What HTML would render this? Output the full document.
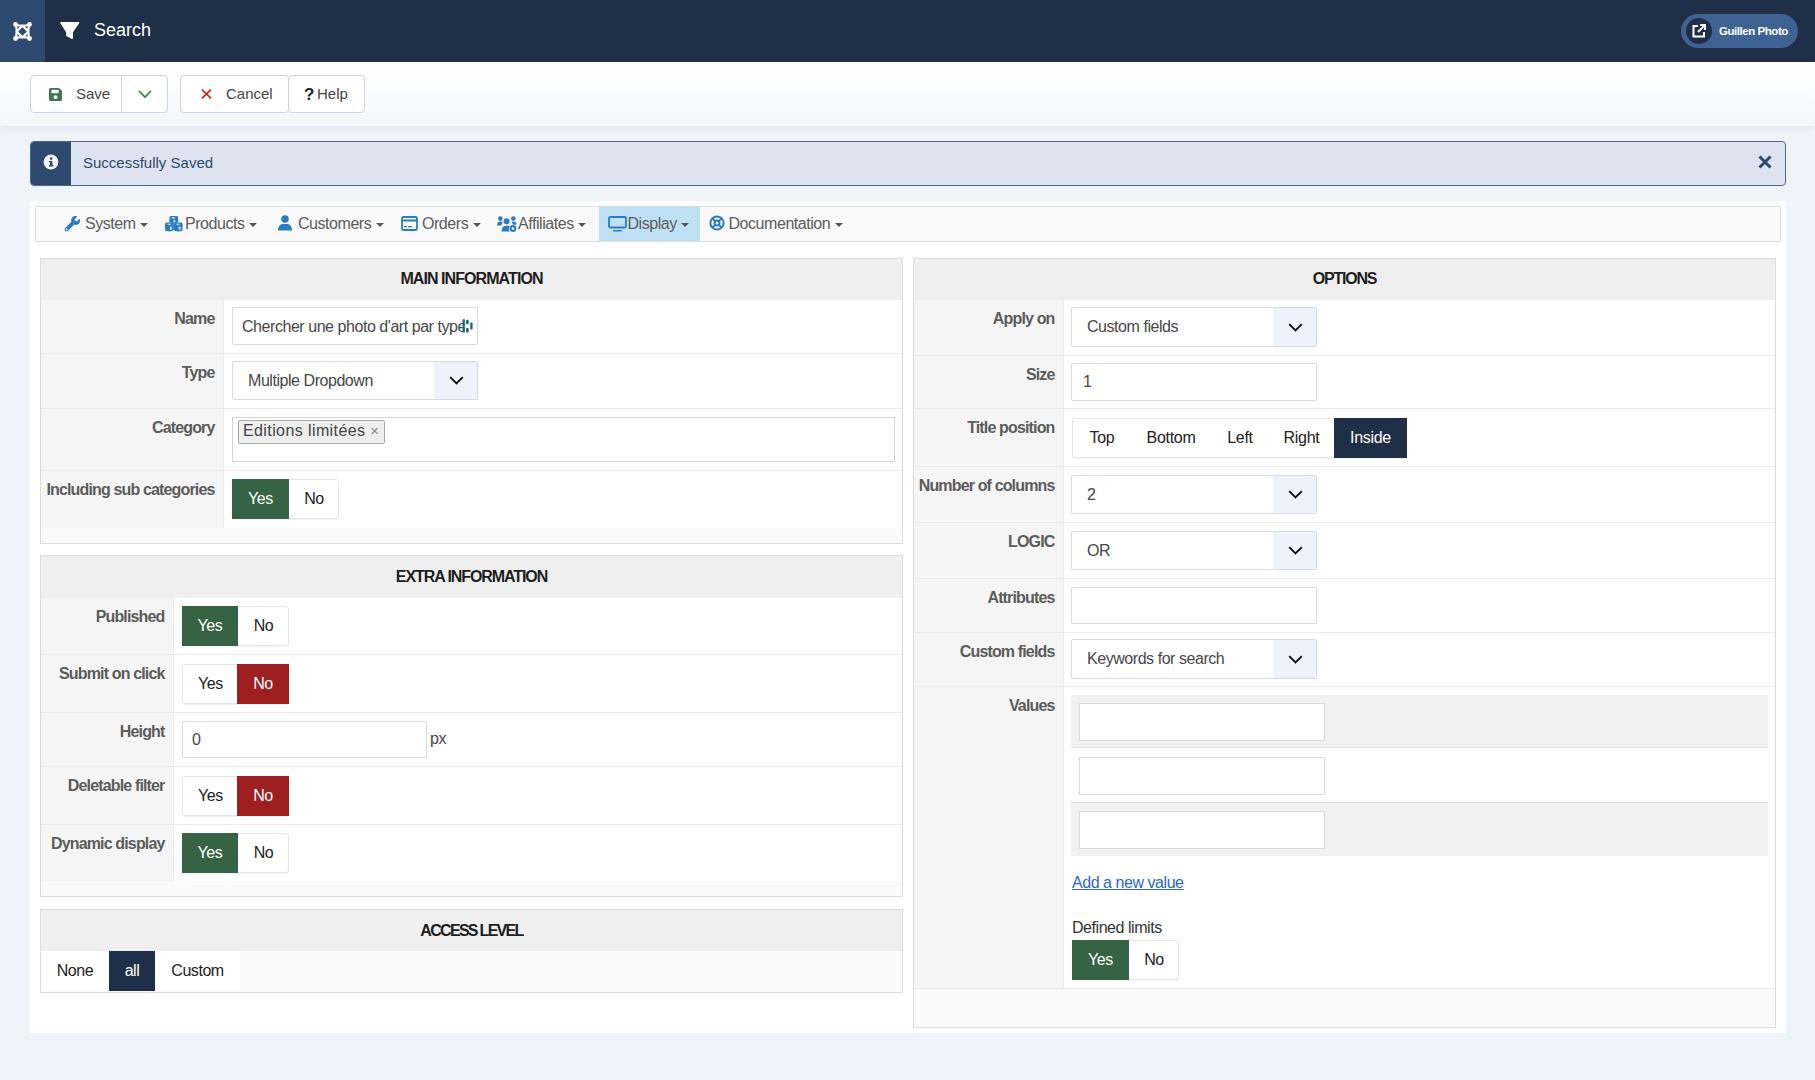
<!DOCTYPE html>
<html><head><meta charset="utf-8">
<style>
*{box-sizing:border-box;}
html,body{margin:0;padding:0;}
body{width:1815px;height:1080px;overflow:hidden;background:#eff3fa;font-family:"Liberation Sans",sans-serif;position:relative;color:#333;}
.abs{position:absolute;}
#hdr{left:0;top:0;width:1815px;height:62px;background:#1f2f47;}
#logo{left:0;top:0;width:45px;height:62px;background:#2e4a6e;}
#title{left:94px;top:19px;font-size:18px;line-height:22px;color:#fff;}
#pill{left:1681px;top:14px;width:117px;height:34px;border-radius:17px;background:#3e6291;}
#pillc{left:5px;top:4px;width:26px;height:26px;border-radius:13px;background:#1f2f47;}
#pilltxt{left:38px;top:10px;font-size:11.5px;font-weight:bold;line-height:15px;color:#fff;letter-spacing:-0.45px;}
#tb{left:0;top:62px;width:1815px;height:64px;background:linear-gradient(#fff,#f4f6fa);box-shadow:0 2px 6px rgba(30,50,90,.06);}
.btn{position:absolute;top:75px;height:38px;background:#fff;border:1px solid #cdd4dd;border-radius:4px;font-size:15px;color:#454545;}
.btn span{position:absolute;top:9px;line-height:18px;}
#alert{left:30px;top:141px;width:1756px;height:45px;background:#dde3ef;border:1px solid #4d6587;border-radius:4px;overflow:hidden;}
#alicon{left:0;top:0;width:40px;height:45px;background:#2e4a6e;}
#altxt{left:52px;top:12px;font-size:15px;line-height:18px;color:#2d4a6e;}
#cont{left:30px;top:201px;width:1756px;height:832px;background:#fff;}
#menu{left:35px;top:206px;width:1746px;height:36px;background:#f9f9f9;border:1px solid #ddd;}
.mi{position:absolute;top:6.5px;font-size:16px;line-height:20px;color:#5c5c5c;letter-spacing:-0.45px;}
.caret{display:inline-block;width:0;height:0;border-left:4px solid transparent;border-right:4px solid transparent;border-top:4px solid #555;vertical-align:middle;margin-left:4.5px;position:relative;top:1px;}
.panel{position:absolute;border:1px solid #dcdcdc;background:#fafafa;}
.ph{position:absolute;left:0;top:0;right:0;height:41px;background:#efefef;font-weight:bold;font-size:16px;line-height:38px;text-align:center;color:#1d1d1d;letter-spacing:-0.8px;}
.row{position:absolute;left:0;right:0;background:#fff;border-bottom:1px solid #ebebeb;}
.lab{position:absolute;left:0;top:0;bottom:0;background:#f5f5f5;border-right:1px solid #ebebeb;}
.lab span{position:absolute;right:8px;top:8px;font-weight:bold;font-size:15px;line-height:20px;color:#555;white-space:nowrap;}
.inp{position:absolute;background:#fff;border:1px solid #d3d9e1;border-radius:2px;font-size:15px;color:#333;}
.inp span{position:absolute;left:10px;top:9px;line-height:18px;white-space:nowrap;}
.sel .arr{position:absolute;right:0;top:0;bottom:0;width:43px;background:#eef2fa;}
.tg{position:absolute;height:40px;border:1px solid #e3e6ea;border-radius:3px;background:#fff;font-size:16px;letter-spacing:-0.45px;color:#222;box-shadow:0 1px 1px rgba(0,0,0,.05);}
.tg div{position:absolute;top:-1px;bottom:-1px;text-align:center;line-height:39px;}
.g{background:#356343;color:#fff;}
.r{background:#9e1f1f;color:#fff;}
.n{background:#1f2f47;color:#fff;}

.pbg{position:absolute;}
.rw{position:absolute;background:#fff;border-bottom:1px solid #ebebeb;}
.lc{position:absolute;background:#f5f5f5;border-right:1px solid #ebebeb;}
.lt{position:absolute;font-weight:bold;font-size:16px;line-height:20px;color:#5c5c5c;text-align:right;white-space:nowrap;letter-spacing:-0.85px;}
.tx{position:absolute;font-size:16px;line-height:20px;white-space:nowrap;color:#474747;letter-spacing:-0.45px;}
.box{position:absolute;background:#fff;border:1px solid #d5dbe2;border-radius:2px;}
.arr{position:absolute;right:0;top:0;bottom:0;background:#eef3fb;}
.chev{position:absolute;}
</style></head><body>

<!-- header -->
<div id="hdr" class="abs">
  <div id="logo" class="abs">
    <svg class="abs" style="left:12px;top:21px" width="21" height="21" viewBox="0 0 21 21"><g fill="none" stroke="#fff" stroke-width="2.2" stroke-linejoin="round"><path d="M4 4 Q10.5 5.6 17 4 Q15.4 10.5 17 17 Q10.5 15.4 4 17 Q5.6 10.5 4 4 Z"/><path d="M10.5 4.6 L16.4 10.5 L10.5 16.4 L4.6 10.5 Z"/></g><g fill="#fff"><circle cx="3.6" cy="3.5" r="2.4"/><circle cx="17.5" cy="3.4" r="2.4"/><circle cx="3.6" cy="17.5" r="2.4"/><circle cx="17.5" cy="17.5" r="2.4"/></g></svg>
  </div>
  <svg class="abs" style="left:60px;top:22px" width="20" height="17" viewBox="0 0 20 17"><path d="M1 0.8 H18.6 L12.2 10.2 V16.3 L6.8 13.5 V10.2 Z" fill="#fff" stroke="#fff" stroke-width="1.4" stroke-linejoin="round"/></svg>
  <div id="title" class="abs">Search</div>
  <div id="pill" class="abs">
    <div id="pillc" class="abs">
      <svg class="abs" style="left:6px;top:6px" width="14" height="14" viewBox="0 0 14 14"><g fill="none" stroke="#fff" stroke-width="2"><path d="M6 2 H1.5 V12.5 H12 V8"/><path d="M6 8 L12.5 1.5 M8 1 H13 V6"/></g></svg>
    </div>
    <div id="pilltxt" class="abs">Guillen Photo</div>
  </div>
</div>

<!-- toolbar -->
<div id="tb" class="abs"></div>
<div class="btn" style="left:30px;width:138px;">
  <svg class="abs" style="left:18px;top:12px" width="13" height="13" viewBox="0 0 13 13"><path d="M0 1.5 Q0 0 1.5 0 H10 L13 3 V11.5 Q13 13 11.5 13 H1.5 Q0 13 0 11.5 Z" fill="#3a7a4a"/><rect x="2.4" y="1.8" width="7.2" height="3.4" fill="#fff"/><circle cx="6.5" cy="9.2" r="1.9" fill="#fff"/></svg>
  <span style="left:45px">Save</span>
  <div class="abs" style="left:90px;top:0;width:1px;height:36px;background:#cdd4dd"></div>
  <svg class="abs" style="left:107px;top:14px" width="14" height="9" viewBox="0 0 14 9"><path d="M1 1 L7 7 L13 1" fill="none" stroke="#3a7a4a" stroke-width="1.7"/></svg>
</div>
<div class="btn" style="left:180px;width:109px;">
  <svg class="abs" style="left:19.5px;top:13px" width="11" height="10" viewBox="0 0 11 10"><path d="M1 0.7 L10 9.3 M10 0.7 L1 9.3" stroke="#c52828" stroke-width="1.8"/></svg>
  <span style="left:45px">Cancel</span>
</div>
<div class="btn" style="left:288px;width:77px;">
  <span style="left:15px;top:9.5px;font-size:17px;font-weight:bold;color:#222">?</span><span style="left:28px">Help</span>
</div>

<!-- alert -->
<div id="alert" class="abs">
  <div id="alicon" class="abs">
    <svg class="abs" style="left:12.3px;top:11.8px" width="16" height="16" viewBox="0 0 16 16"><circle cx="8" cy="8" r="7.4" fill="#f2f4f8"/><rect x="7" y="7" width="2.4" height="5" fill="#2e4a6e"/><rect x="6" y="11" width="4.4" height="1.5" fill="#2e4a6e"/><rect x="6" y="7" width="2" height="1.3" fill="#2e4a6e"/><circle cx="8.2" cy="4.6" r="1.3" fill="#2e4a6e"/></svg>
  </div>
  <div id="altxt" class="abs">Successfully Saved</div>
  <svg class="abs" style="left:1727px;top:13px" width="14" height="14" viewBox="0 0 14 14"><path d="M1.5 1.5 L12.5 12.5 M12.5 1.5 L1.5 12.5" stroke="#2e4a6e" stroke-width="3"/></svg>
</div>

<!-- content -->
<div id="cont" class="abs"></div>
<div id="menu" class="abs">
  <div class="abs" style="left:563px;top:0;width:101px;height:34px;background:#bee0f3"></div>
  <!-- wrench -->
  <svg class="abs" style="left:28px;top:8px" width="17" height="17" viewBox="0 0 17 17"><path d="M15.6 3.6 L13 6.2 L11 6 L10.8 4 L13.4 1.4 C11.6 0.5 9.3 0.9 8.1 2.4 C7.1 3.6 6.9 5.3 7.4 6.7 L1.2 12.9 C0.4 13.7 0.4 15 1.2 15.8 C2 16.6 3.3 16.6 4.1 15.8 L10.3 9.6 C11.7 10.1 13.4 9.9 14.6 8.9 C16.1 7.7 16.5 5.4 15.6 3.6 Z" fill="#2a7bc1"/><circle cx="2.6" cy="14.4" r="0.9" fill="#f9f9f9"/></svg>
  <div class="mi" style="left:49px">System<span class="caret"></span></div>
  <!-- cubes -->
  <svg class="abs" style="left:128.5px;top:8.5px" width="18" height="16" viewBox="0 0 18 16"><g fill="#2a7bc1"><path d="M4.4 1.6 Q4.4 0.3 6 0 L8.8 -0.2 L11.6 0 Q13.2 0.3 13.2 1.6 V6.2 L8.8 7.4 L4.4 6.2 Z"/><path d="M0 8.2 Q0 6.9 1.6 6.6 L4.4 6.4 L7.2 6.6 Q8.8 6.9 8.8 8.2 V13.6 Q8.8 14.6 7.4 15 L4.4 15.6 L1.4 15 Q0 14.6 0 13.6 Z"/><path d="M8.8 8.2 Q8.8 6.9 10.4 6.6 L13.2 6.4 L16 6.6 Q17.6 6.9 17.6 8.2 V13.6 Q17.6 14.6 16.2 15 L13.2 15.6 L10.2 15 Q8.8 14.6 8.8 13.6 Z"/></g><g fill="#b9d3ea"><ellipse cx="8.3" cy="1.9" rx="2" ry="0.8"/><ellipse cx="4.2" cy="8.3" rx="2" ry="0.8"/><ellipse cx="13" cy="8.3" rx="2" ry="0.8"/></g><g fill="#f9f9f9"><rect x="8.6" y="3.9" width="1.6" height="2.4" rx="0.6"/><rect x="5" y="10.6" width="1.6" height="3.2" rx="0.6"/><rect x="13.8" y="10.6" width="1.6" height="3.2" rx="0.6"/></g></svg>
  <div class="mi" style="left:149px">Products<span class="caret"></span></div>
  <!-- user -->
  <svg class="abs" style="left:242px;top:8px" width="14" height="16" viewBox="0 0 14 16"><circle cx="7" cy="4" r="3.8" fill="#2a7bc1"/><path d="M0 15.5 C0 11 2.5 9 5 9 H9 C11.5 9 14 11 14 15.5 Z" fill="#2a7bc1"/></svg>
  <div class="mi" style="left:262px">Customers<span class="caret"></span></div>
  <!-- card -->
  <svg class="abs" style="left:365px;top:9px" width="17" height="15" viewBox="0 0 17 15"><rect x="1" y="1" width="15" height="13" rx="1.5" fill="none" stroke="#2a7bc1" stroke-width="1.8"/><rect x="1" y="3.5" width="15" height="2" fill="#2a7bc1"/><rect x="3" y="10" width="3" height="1.3" fill="#2a7bc1"/><rect x="7" y="10" width="4" height="1.3" fill="#2a7bc1"/></svg>
  <div class="mi" style="left:386px">Orders<span class="caret"></span></div>
  <!-- users cog -->
  <svg class="abs" style="left:461px;top:8.5px" width="20" height="16" viewBox="0 0 20 16"><g fill="#2a7bc1"><circle cx="3.3" cy="2.6" r="2.3"/><circle cx="16.3" cy="2.6" r="2.3"/><circle cx="9.6" cy="5.2" r="3"/><path d="M0 9.6 Q0 5.6 3.3 5.6 Q5 5.6 5.9 6.6 Q4.6 7.8 4.4 9.6 Z"/><path d="M14.5 6.3 Q15.3 5.6 16.5 5.6 Q19.6 5.6 19.6 8.6 Q18 8.4 16.6 9 Q15.5 7.4 14.5 6.3 Z"/><path d="M4.6 15.6 Q4.6 9.6 9.6 9.6 Q11.6 9.6 12.7 10.4 Q11.6 12 12 14.2 L12.8 15.6 Z"/><circle cx="16" cy="12.5" r="3.4"/></g><circle cx="16" cy="12.5" r="1.3" fill="#f9f9f9"/></svg>
  <div class="mi" style="left:482px">Affiliates<span class="caret"></span></div>
  <!-- desktop -->
  <svg class="abs" style="left:572px;top:9px" width="19" height="16" viewBox="0 0 19 16"><rect x="1" y="1" width="17" height="10.5" rx="1.5" fill="none" stroke="#2a7bc1" stroke-width="1.8"/><rect x="5" y="14" width="9" height="1.6" rx="0.8" fill="#2a7bc1"/></svg>
  <div class="mi" style="left:591.5px">Display<span class="caret"></span></div>
  <!-- life ring -->
  <svg class="abs" style="left:673px;top:8.3px" width="16" height="16" viewBox="0 0 16 16"><circle cx="8" cy="8" r="6.6" fill="none" stroke="#2a7bc1" stroke-width="2"/><circle cx="8" cy="8" r="2.5" fill="none" stroke="#2a7bc1" stroke-width="2"/><path d="M3.3 3.3 L5.9 5.9 M12.7 3.3 L10.1 5.9 M3.3 12.7 L5.9 10.1 M12.7 12.7 L10.1 10.1" stroke="#2a7bc1" stroke-width="2"/></svg>
  <div class="mi" style="left:692.5px">Documentation<span class="caret"></span></div>
</div>

<!-- MAIN INFORMATION -->
<div class="panel" style="left:40px;top:258px;width:863px;height:286px;">
  <div class="ph" style="letter-spacing:-0.93px;line-height:40px">MAIN INFORMATION</div>
</div>

<!-- EXTRA INFORMATION -->
<div class="panel" style="left:40px;top:555px;width:863px;height:342px;">
  <div class="ph" style="letter-spacing:-1.08px;line-height:42px;height:42px">EXTRA INFORMATION</div>
</div>

<!-- ACCESS LEVEL -->
<div class="panel" style="left:40px;top:909px;width:863px;height:84px;">
  <div class="ph" style="letter-spacing:-1.7px;line-height:42px">ACCESS LEVEL</div>
</div>

<!-- OPTIONS -->
<div class="panel" style="left:913px;top:258px;width:863px;height:770px;">
  <div class="ph" style="letter-spacing:-1.24px;line-height:40px">OPTIONS</div>
</div>

<!--ROWS-->
<div class="rw" style="left:41px;top:300px;width:861px;height:54px;"></div>
<div class="lc" style="left:41px;top:300px;width:183px;height:53px;"></div>
<div class="lt" style="left:41px;top:309px;width:173.5px;">Name</div>
<div class="rw" style="left:41px;top:354px;width:861px;height:55px;"></div>
<div class="lc" style="left:41px;top:354px;width:183px;height:54px;"></div>
<div class="lt" style="left:41px;top:363px;width:173.5px;">Type</div>
<div class="rw" style="left:41px;top:409px;width:861px;height:62px;"></div>
<div class="lc" style="left:41px;top:409px;width:183px;height:61px;"></div>
<div class="lt" style="left:41px;top:418px;width:173.5px;">Category</div>
<div class="rw" style="left:41px;top:471px;width:861px;height:57px;border-bottom:none;"></div>
<div class="lc" style="left:41px;top:471px;width:183px;height:57px;"></div>
<div class="lt" style="left:41px;top:480px;width:173.5px;">Including sub categories</div>
<div class="box" style="left:232px;top:307px;width:246px;height:38px;"></div>
<div class="abs" style="left:242px;top:316.5px;width:221px;height:22px;overflow:hidden"><div class="tx" style="left:0;top:0">Chercher une photo d&#39;art par type</div></div>
<svg class="abs" style="left:462px;top:319px" width="11" height="14" viewBox="0 0 11 14"><g fill="#1b6a7a"><rect x="0.5" y="0.2" width="2.4" height="13.3" rx="0.6"/><rect x="4" y="0.8" width="2.7" height="4.4" rx="1"/><rect x="4" y="9" width="2.7" height="4.5" rx="1"/><rect x="8.2" y="3.4" width="2.4" height="7.2" rx="1"/></g></svg>
<div class="box" style="left:232px;top:361px;width:246px;height:39px;"><div class="arr" style="width:43px"></div></div>
<svg class="chev" style="left:449px;top:376.0px" width="15" height="9" viewBox="0 0 15 9"><path d="M1.2 1.2 L7.5 7.5 L13.8 1.2" fill="none" stroke="#111" stroke-width="1.9"/></svg>
<div class="tx" style="left:248px;top:371px;">Multiple Dropdown</div>
<div class="box" style="left:232px;top:417px;width:663px;height:45px;border-radius:0;border-color:#d3d3d3"></div>
<div class="abs" style="left:238px;top:420px;width:147px;height:24px;background:#eee;border:1px solid #aaa;border-radius:2px;"></div>
<div class="tx" style="left:243px;top:421px;font-size:16px;letter-spacing:0.4px;color:#444">Editions limitées <span style="color:#888;font-size:15px">×</span></div>
<div class="tg" style="left:232px;top:479px;width:107px;">
<div class="g" style="left:-1px;width:57px">Yes</div><div style="left:56px;width:50px">No</div>
</div>
<div class="rw" style="left:41px;top:598px;width:861px;height:57px;"></div>
<div class="lc" style="left:41px;top:598px;width:133px;height:56px;"></div>
<div class="lt" style="left:41px;top:607px;width:123.5px;">Published</div>
<div class="rw" style="left:41px;top:655px;width:861px;height:58px;"></div>
<div class="lc" style="left:41px;top:655px;width:133px;height:57px;"></div>
<div class="lt" style="left:41px;top:664px;width:123.5px;">Submit on click</div>
<div class="rw" style="left:41px;top:713px;width:861px;height:54px;"></div>
<div class="lc" style="left:41px;top:713px;width:133px;height:53px;"></div>
<div class="lt" style="left:41px;top:722px;width:123.5px;">Height</div>
<div class="rw" style="left:41px;top:767px;width:861px;height:58px;"></div>
<div class="lc" style="left:41px;top:767px;width:133px;height:57px;"></div>
<div class="lt" style="left:41px;top:776px;width:123.5px;">Deletable filter</div>
<div class="rw" style="left:41px;top:825px;width:861px;height:56px;border-bottom:none;"></div>
<div class="lc" style="left:41px;top:825px;width:133px;height:56px;"></div>
<div class="lt" style="left:41px;top:834px;width:123.5px;">Dynamic display</div>
<div class="tg" style="left:182px;top:606px;width:107px;">
<div class="g" style="left:-1px;width:56px">Yes</div><div style="left:55px;width:51px">No</div>
</div>
<div class="tg" style="left:182px;top:664px;width:107px;">
<div style="left:0px;width:55px">Yes</div><div class="r" style="left:54px;width:52px;">No</div>
</div>
<div class="box" style="left:182px;top:721px;width:245px;height:37px;"></div>
<div class="tx" style="left:192px;top:730.2px;">0</div>
<div class="tx" style="left:430px;top:729px;">px</div>
<div class="tg" style="left:182px;top:776px;width:107px;">
<div style="left:0px;width:55px">Yes</div><div class="r" style="left:54px;width:52px;">No</div>
</div>
<div class="tg" style="left:182px;top:833px;width:107px;">
<div class="g" style="left:-1px;width:56px">Yes</div><div style="left:55px;width:51px">No</div>
</div>
<div class="tg" style="left:41px;top:951px;width:199px;height:40px;border-radius:0;border:none;box-shadow:none;background:#fff"><div style="left:0;width:68px;top:0;bottom:0;line-height:40px">None</div><div class="n" style="left:68px;width:46px;top:0;bottom:0;line-height:40px">all</div><div style="left:114px;width:85px;top:0;bottom:0;line-height:40px">Custom</div></div>
<div class="rw" style="left:914px;top:300px;width:861px;height:56px;"></div>
<div class="lc" style="left:914px;top:300px;width:150px;height:55px;"></div>
<div class="lt" style="left:914px;top:309px;width:140.5px;">Apply on</div>
<div class="rw" style="left:914px;top:356px;width:861px;height:53px;"></div>
<div class="lc" style="left:914px;top:356px;width:150px;height:52px;"></div>
<div class="lt" style="left:914px;top:365px;width:140.5px;">Size</div>
<div class="rw" style="left:914px;top:409px;width:861px;height:58px;"></div>
<div class="lc" style="left:914px;top:409px;width:150px;height:57px;"></div>
<div class="lt" style="left:914px;top:418px;width:140.5px;">Title position</div>
<div class="rw" style="left:914px;top:467px;width:861px;height:56px;"></div>
<div class="lc" style="left:914px;top:467px;width:150px;height:55px;"></div>
<div class="lt" style="left:914px;top:476px;width:140.5px;">Number of columns</div>
<div class="rw" style="left:914px;top:523px;width:861px;height:56px;"></div>
<div class="lc" style="left:914px;top:523px;width:150px;height:55px;"></div>
<div class="lt" style="left:914px;top:532px;width:140.5px;">LOGIC</div>
<div class="rw" style="left:914px;top:579px;width:861px;height:54px;"></div>
<div class="lc" style="left:914px;top:579px;width:150px;height:53px;"></div>
<div class="lt" style="left:914px;top:588px;width:140.5px;">Attributes</div>
<div class="rw" style="left:914px;top:633px;width:861px;height:54px;"></div>
<div class="lc" style="left:914px;top:633px;width:150px;height:53px;"></div>
<div class="lt" style="left:914px;top:642px;width:140.5px;">Custom fields</div>
<div class="rw" style="left:914px;top:687px;width:861px;height:302px;"></div>
<div class="lc" style="left:914px;top:687px;width:150px;height:301px;"></div>
<div class="lt" style="left:914px;top:696px;width:140.5px;">Values</div>
<div class="box" style="left:1071px;top:307px;width:246px;height:40px;"><div class="arr" style="width:43px"></div></div>
<svg class="chev" style="left:1288px;top:322.5px" width="15" height="9" viewBox="0 0 15 9"><path d="M1.2 1.2 L7.5 7.5 L13.8 1.2" fill="none" stroke="#111" stroke-width="1.9"/></svg>
<div class="tx" style="left:1087px;top:317px;">Custom fields</div>
<div class="box" style="left:1071px;top:363px;width:246px;height:38px;"></div>
<div class="tx" style="left:1083px;top:372.2px;">1</div>
<div class="tg" style="left:1072px;top:418px;width:334px;height:40px;color:#222;font-size:16px;letter-spacing:-0.3px"><div style="left:0;width:58px">Top</div><div style="left:58px;width:80px">Bottom</div><div style="left:138px;width:58px">Left</div><div style="left:196px;width:65px">Right</div><div class="n" style="left:261px;width:73px;right:-1px;">Inside</div></div>
<div class="box" style="left:1071px;top:475px;width:246px;height:39px;"><div class="arr" style="width:43px"></div></div>
<svg class="chev" style="left:1288px;top:490.0px" width="15" height="9" viewBox="0 0 15 9"><path d="M1.2 1.2 L7.5 7.5 L13.8 1.2" fill="none" stroke="#111" stroke-width="1.9"/></svg>
<div class="tx" style="left:1087px;top:485px;">2</div>
<div class="box" style="left:1071px;top:531px;width:246px;height:39px;"><div class="arr" style="width:43px"></div></div>
<svg class="chev" style="left:1288px;top:546.0px" width="15" height="9" viewBox="0 0 15 9"><path d="M1.2 1.2 L7.5 7.5 L13.8 1.2" fill="none" stroke="#111" stroke-width="1.9"/></svg>
<div class="tx" style="left:1087px;top:541px;">OR</div>
<div class="box" style="left:1071px;top:587px;width:246px;height:37px;"></div>
<div class="box" style="left:1071px;top:639px;width:246px;height:40px;"><div class="arr" style="width:43px"></div></div>
<svg class="chev" style="left:1288px;top:654.5px" width="15" height="9" viewBox="0 0 15 9"><path d="M1.2 1.2 L7.5 7.5 L13.8 1.2" fill="none" stroke="#111" stroke-width="1.9"/></svg>
<div class="tx" style="left:1087px;top:649px;">Keywords for search</div>
<div class="abs" style="left:1071px;top:695px;width:697px;height:53px;background:#f1f1f1;border-bottom:1px solid #e3e3e3"></div>
<div class="abs" style="left:1071px;top:802px;width:697px;height:54px;background:#f1f1f1;border-top:1px solid #e3e3e3"></div>
<div class="box" style="left:1079px;top:703px;width:246px;height:38px;border-radius:0;"></div>
<div class="box" style="left:1079px;top:757px;width:246px;height:38px;border-radius:0;"></div>
<div class="box" style="left:1079px;top:811px;width:246px;height:38px;border-radius:0;"></div>
<div class="tx" style="left:1072px;top:872.5px;color:#2a69b8;text-decoration:underline;">Add a new value</div>
<div class="tx" style="left:1072px;top:917.5px;color:#333">Defined limits</div>
<div class="tg" style="left:1072px;top:940px;width:107px;">
<div class="g" style="left:-1px;width:57px">Yes</div><div style="left:56px;width:50px">No</div>
</div>
<!--/ROWS-->
</body></html>
